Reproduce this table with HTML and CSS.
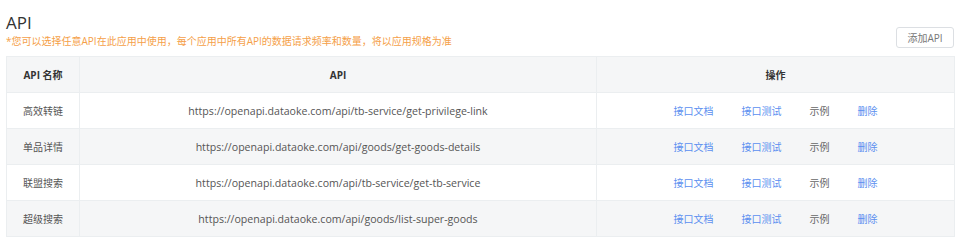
FILE: index.html
```html
<!DOCTYPE html>
<html lang="zh">
<head>
<meta charset="utf-8">
<link rel="stylesheet" href="styles.css">
</head>
<body>
<div class="page">
  <div class="head">
    <div class="head-text">
      <h1 class="title">API</h1>
      <p class="note">*您可以选择任意API在此应用中使用，每个应用中所有API的数据请求频率和数量，将以应用规格为准</p>
    </div>
    <button class="add-btn">添加API</button>
  </div>
  <table class="api-table">
    <colgroup>
      <col class="c-name">
      <col class="c-api">
      <col class="c-ops">
    </colgroup>
    <thead>
      <tr><th>API 名称</th><th>API</th><th>操作</th></tr>
    </thead>
    <tbody>
      <tr>
        <td>高效转链</td>
        <td class="url">https://openapi.dataoke.com/api/tb-service/get-privilege-link</td>
        <td><div class="ops"><a class="link">接口文档</a><a class="link">接口测试</a><span class="plain">示例</span><a class="link">删除</a></div></td>
      </tr>
      <tr>
        <td>单品详情</td>
        <td class="url">https://openapi.dataoke.com/api/goods/get-goods-details</td>
        <td><div class="ops"><a class="link">接口文档</a><a class="link">接口测试</a><span class="plain">示例</span><a class="link">删除</a></div></td>
      </tr>
      <tr>
        <td>联盟搜索</td>
        <td class="url">https://openapi.dataoke.com/api/tb-service/get-tb-service</td>
        <td><div class="ops"><a class="link">接口文档</a><a class="link">接口测试</a><span class="plain">示例</span><a class="link">删除</a></div></td>
      </tr>
      <tr>
        <td>超级搜索</td>
        <td class="url">https://openapi.dataoke.com/api/goods/list-super-goods</td>
        <td><div class="ops"><a class="link">接口文档</a><a class="link">接口测试</a><span class="plain">示例</span><a class="link">删除</a></div></td>
      </tr>
    </tbody>
  </table>
</div>
</body>
</html>
```

FILE: styles.css
```css
html, body {
  margin: 0;
  padding: 0;
  background: #ffffff;
}
body {
  font-family: "Open Sans", "Noto Sans CJK SC", sans-serif;
  color: #555;
}
.page {
  padding: 13px 6px 0 6px;
}
.head {
  display: flex;
  justify-content: space-between;
  align-items: flex-end;
  margin-bottom: 8px;
}
.title {
  margin: 0;
  font-size: 17px;
  font-weight: 400;
  line-height: 20px;
  color: #333;
}
.note {
  margin: 1px 0 0 0;
  font-size: 10px;
  line-height: 14px;
  color: #f5a048;
}
.add-btn {
  width: 58px;
  height: 21px;
  padding: 0;
  margin: 0 0 0 0;
  border: 1px solid #dcdfe3;
  border-radius: 3px;
  background: #fff;
  font-family: "Open Sans", "Noto Sans CJK SC", sans-serif;
  font-size: 10px;
  color: #777;
}
.api-table {
  width: 948px;
  border-collapse: collapse;
  table-layout: fixed;
  font-size: 10px;
}
.c-name { width: 73px; }
.c-api { width: 517px; }
.c-ops { width: 358px; }
.api-table th,
.api-table td {
  border: 1px solid #ebeef0;
  height: 35px;
  padding: 0;
  text-align: center;
}
.api-table th {
  background: #f5f6f7;
  font-weight: 700;
  color: #333;
  height: 35px;
}
.api-table td {
  color: #555;
}
.api-table td.url {
  font-size: 10.6px;
}
.api-table tbody tr:nth-child(even) td {
  background: #f5f6f7;
}
.ops {
  display: flex;
  justify-content: center;
  gap: 28px;
}
.link {
  color: #5b8ff0;
  cursor: pointer;
}
.plain {
  color: #666;
}
```
